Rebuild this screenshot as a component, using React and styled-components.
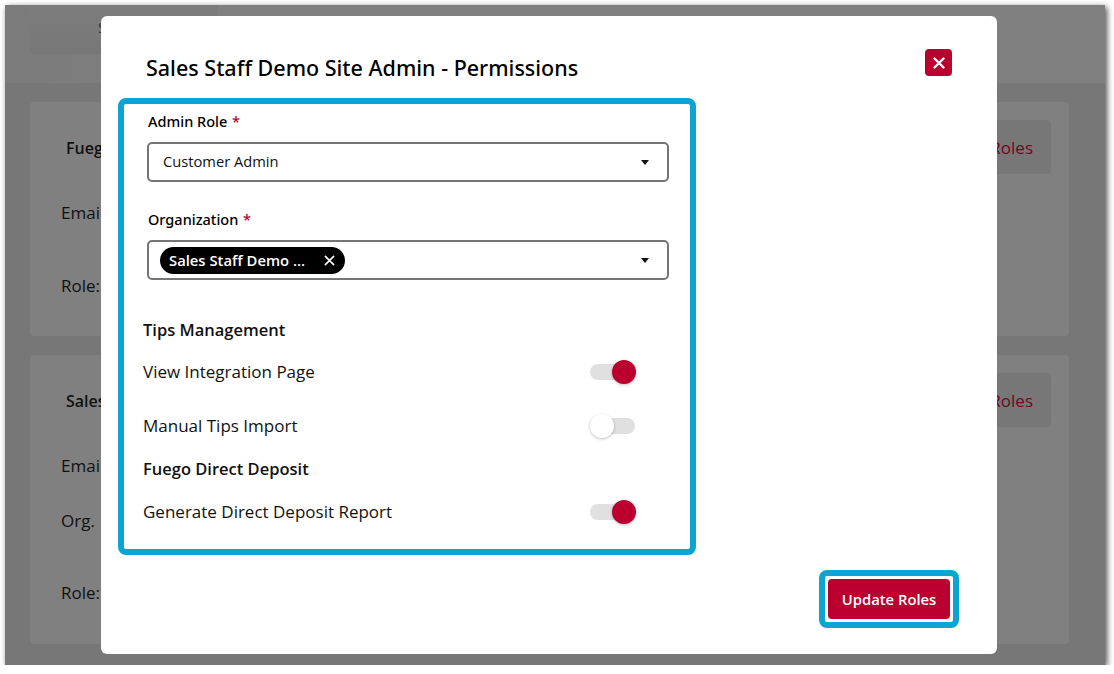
import React from 'react'
import styled, { createGlobalStyle } from 'styled-components'

const Global = createGlobalStyle`
    html, body {
        margin: 0;
        background: #fff;
        font-family: "Open Sans", "Noto Sans", sans-serif;
    }
`

const Screen = styled.div`
    position: relative;
    width: 1100px;
    height: 660px;
    margin: 5px 0 0 5px;
    overflow: hidden;
    background: #777;
    box-shadow: 2px 2px 6px rgba(0, 0, 0, 0.7);
`

const Band = styled.div`
    height: 78px;
    padding: 0 36px 0 25px;
    background: linear-gradient(90deg, #7b7b7b 0, #808080 210px);
`

const TopCard = styled.div`
    width: 188px;
    height: 49px;
    background: linear-gradient(180deg, #7d7d7d 0, #777 100%);
    border-radius: 0 0 4px 4px;
    color: #333;
    font-size: 15px;
    padding: 12px 0 0 68px;
    box-sizing: border-box;
`

const Main = styled.div`
    display: flex;
    flex-direction: column;
    gap: 19px;
    padding: 19px 36px 0 25px;
`

const Card = styled.div`
    position: relative;
    height: ${p => p.$height}px;
    background: #808080;
    border-radius: 4px;
    padding: 18px 18px 0 31px;
    box-sizing: border-box;
    display: flex;
    flex-direction: column;
    color: #111;
`

const CardHead = styled.div`
    display: flex;
    justify-content: space-between;
    height: 54px;
`

const CardName = styled.b`
    font-size: 16px;
    font-weight: 600;
    line-height: 56px;
    margin-left: 5px;
`

const GhostButton = styled.div`
    width: 180px;
    background: #777;
    border-radius: 4px;
    color: #6e0823;
    font-size: 17px;
    line-height: 55px;
    text-align: right;
    padding-right: 18px;
    box-sizing: border-box;
`

const CardLine = styled.div`
    font-size: 17px;
    line-height: 24px;
    margin-top: ${p => p.$top}px;
`

const Modal = styled.div`
    position: absolute;
    left: 96px;
    top: 11px;
    width: 896px;
    height: 638px;
    background: #fff;
    border-radius: 6px;
`

const ModalHead = styled.div`
    display: flex;
    justify-content: space-between;
    align-items: flex-start;
    height: 82px;
    padding: 33px 45px 0;
    box-sizing: border-box;
`

const Title = styled.h2`
    margin: 0;
    font-family: "Noto Sans", "Open Sans", sans-serif;
    font-size: 21.5px;
    font-weight: 500;
    line-height: 38px;
    color: #000;
`

const CloseButton = styled.button`
    display: flex;
    align-items: center;
    justify-content: center;
    width: 27px;
    height: 27px;
    padding: 0;
    border: 0;
    border-radius: 4px;
    background: #bb0030;
`

const Callout = styled.div`
    width: 578px;
    height: 457px;
    margin-left: 17px;
    padding: 7px 0 0 19px;
    box-sizing: border-box;
    border: 6px solid #0ca5d3;
    border-radius: 8px;
`

const FieldGroup = styled.div`
    width: 522px;
    margin: ${p => p.$top || 0}px 0 0 4px;
`

const Label = styled.div`
    font-family: "Noto Sans", "Open Sans", sans-serif;
    font-size: 14.5px;
    font-weight: 500;
    line-height: 20px;
    padding-left: 1px;
    color: #000;

    span {
        color: #bb0030;
        margin-left: 1px;
    }
`

const SelectBox = styled.div`
    display: flex;
    align-items: center;
    justify-content: space-between;
    height: 40px;
    margin-top: ${p => p.$top}px;
    padding: 0 18px 0 ${p => p.$left}px;
    box-sizing: border-box;
    border: 2px solid #757575;
    border-radius: 5px;
    font-size: 14.7px;
    color: #111;
`

const SelectValue = styled.span`
    margin-top: -2px;
`

const Caret = styled.i`
    width: 0;
    height: 0;
    border-left: 4.5px solid transparent;
    border-right: 4.5px solid transparent;
    border-top: 5px solid #111;
`

const Chip = styled.div`
    display: flex;
    align-items: center;
    justify-content: space-between;
    width: 185px;
    height: 27px;
    padding: 0 10px 0 9px;
    box-sizing: border-box;
    border-radius: 14px;
    background: #000;
    color: #fff;
    font-size: 14.8px;
    font-weight: 600;
    white-space: nowrap;
`

const SectionTitle = styled.div`
    margin-top: ${p => p.$top}px;
    font-size: 16.5px;
    font-weight: 600;
    line-height: 24px;
    color: #111;
`

const Row = styled.div`
    display: flex;
    align-items: center;
    justify-content: space-between;
    width: 492px;
    height: 24px;
    margin-top: ${p => p.$top}px;
    font-size: 17px;
    color: #111;
`

const RowText = styled.span`
    margin-top: -2px;
`

const Track = styled.div`
    position: relative;
    width: 45px;
    height: 16px;
    border-radius: 8px;
    background: #e0e0e0;
`

const Thumb = styled.div`
    position: absolute;
    top: -4px;
    left: ${p => (p.$on ? '22px' : '-0.5px')};
    width: 24px;
    height: 24px;
    border-radius: 50%;
    background: ${p => (p.$on ? '#bb0030' : '#fff')};
    box-shadow: 0 1px 3px rgba(0, 0, 0, 0.25);
`

const Footer = styled.div`
    display: flex;
    justify-content: flex-end;
    margin-top: 15px;
    padding-right: 38px;
`

const ButtonCallout = styled.div`
    padding: 3px;
    border: 6px solid #0ca5d3;
    border-radius: 8px;
`

const SubmitButton = styled.button`
    display: block;
    width: 122px;
    height: 40px;
    padding: 0;
    border: 0;
    border-radius: 4px;
    background: #bb0030;
    color: #fff;
    font-family: inherit;
    font-size: 14.8px;
    font-weight: 600;
`

const Toggle = ({ on }) => (
    <Track>
        <Thumb $on={on} />
    </Track>
)

const Cross = ({ size, width }) => (
    <svg width={size} height={size} viewBox="0 0 12 12" fill="none" stroke="#fff" strokeWidth={width} strokeLinecap="round">
        <path d="M1.5 1.5l9 9M10.5 1.5l-9 9" />
    </svg>
)

const App = () => {
    return (
        <>
            <Global />
            <Screen>
                <Band>
                    <TopCard>S</TopCard>
                </Band>
                <Main>
                    <Card $height={234}>
                        <CardHead>
                            <CardName>Fuego Admin</CardName>
                            <GhostButton>Update Roles</GhostButton>
                        </CardHead>
                        <CardLine $top={27}>Email:</CardLine>
                        <CardLine $top={49}>Role:</CardLine>
                    </Card>
                    <Card $height={289}>
                        <CardHead>
                            <CardName>Sales Staff</CardName>
                            <GhostButton>Update Roles</GhostButton>
                        </CardHead>
                        <CardLine $top={27}>Email:</CardLine>
                        <CardLine $top={31}>Org.</CardLine>
                        <CardLine $top={48}>Role:</CardLine>
                    </Card>
                </Main>
                <Modal>
                    <ModalHead>
                        <Title>Sales Staff Demo Site Admin - Permissions</Title>
                        <CloseButton>
                            <Cross size={12} width={2.4} />
                        </CloseButton>
                    </ModalHead>
                    <Callout>
                        <FieldGroup>
                            <Label>Admin Role <span>*</span></Label>
                            <SelectBox $top={11} $left={14}>
                                <SelectValue>Customer Admin</SelectValue>
                                <Caret />
                            </SelectBox>
                        </FieldGroup>
                        <FieldGroup $top={27}>
                            <Label>Organization <span>*</span></Label>
                            <SelectBox $top={11} $left={11}>
                                <Chip>
                                    Sales Staff Demo ...
                                    <Cross size={11} width={1.8} />
                                </Chip>
                                <Caret />
                            </SelectBox>
                        </FieldGroup>
                        <SectionTitle $top={38}>Tips Management</SectionTitle>
                        <Row $top={18}>
                            <RowText>View Integration Page</RowText>
                            <Toggle on />
                        </Row>
                        <Row $top={30}>
                            <RowText>Manual Tips Import</RowText>
                            <Toggle />
                        </Row>
                        <SectionTitle $top={19}>Fuego Direct Deposit</SectionTitle>
                        <Row $top={19}>
                            <RowText>Generate Direct Deposit Report</RowText>
                            <Toggle on />
                        </Row>
                    </Callout>
                    <Footer>
                        <ButtonCallout>
                            <SubmitButton>Update Roles</SubmitButton>
                        </ButtonCallout>
                    </Footer>
                </Modal>
            </Screen>
        </>
    )
}

export default App
